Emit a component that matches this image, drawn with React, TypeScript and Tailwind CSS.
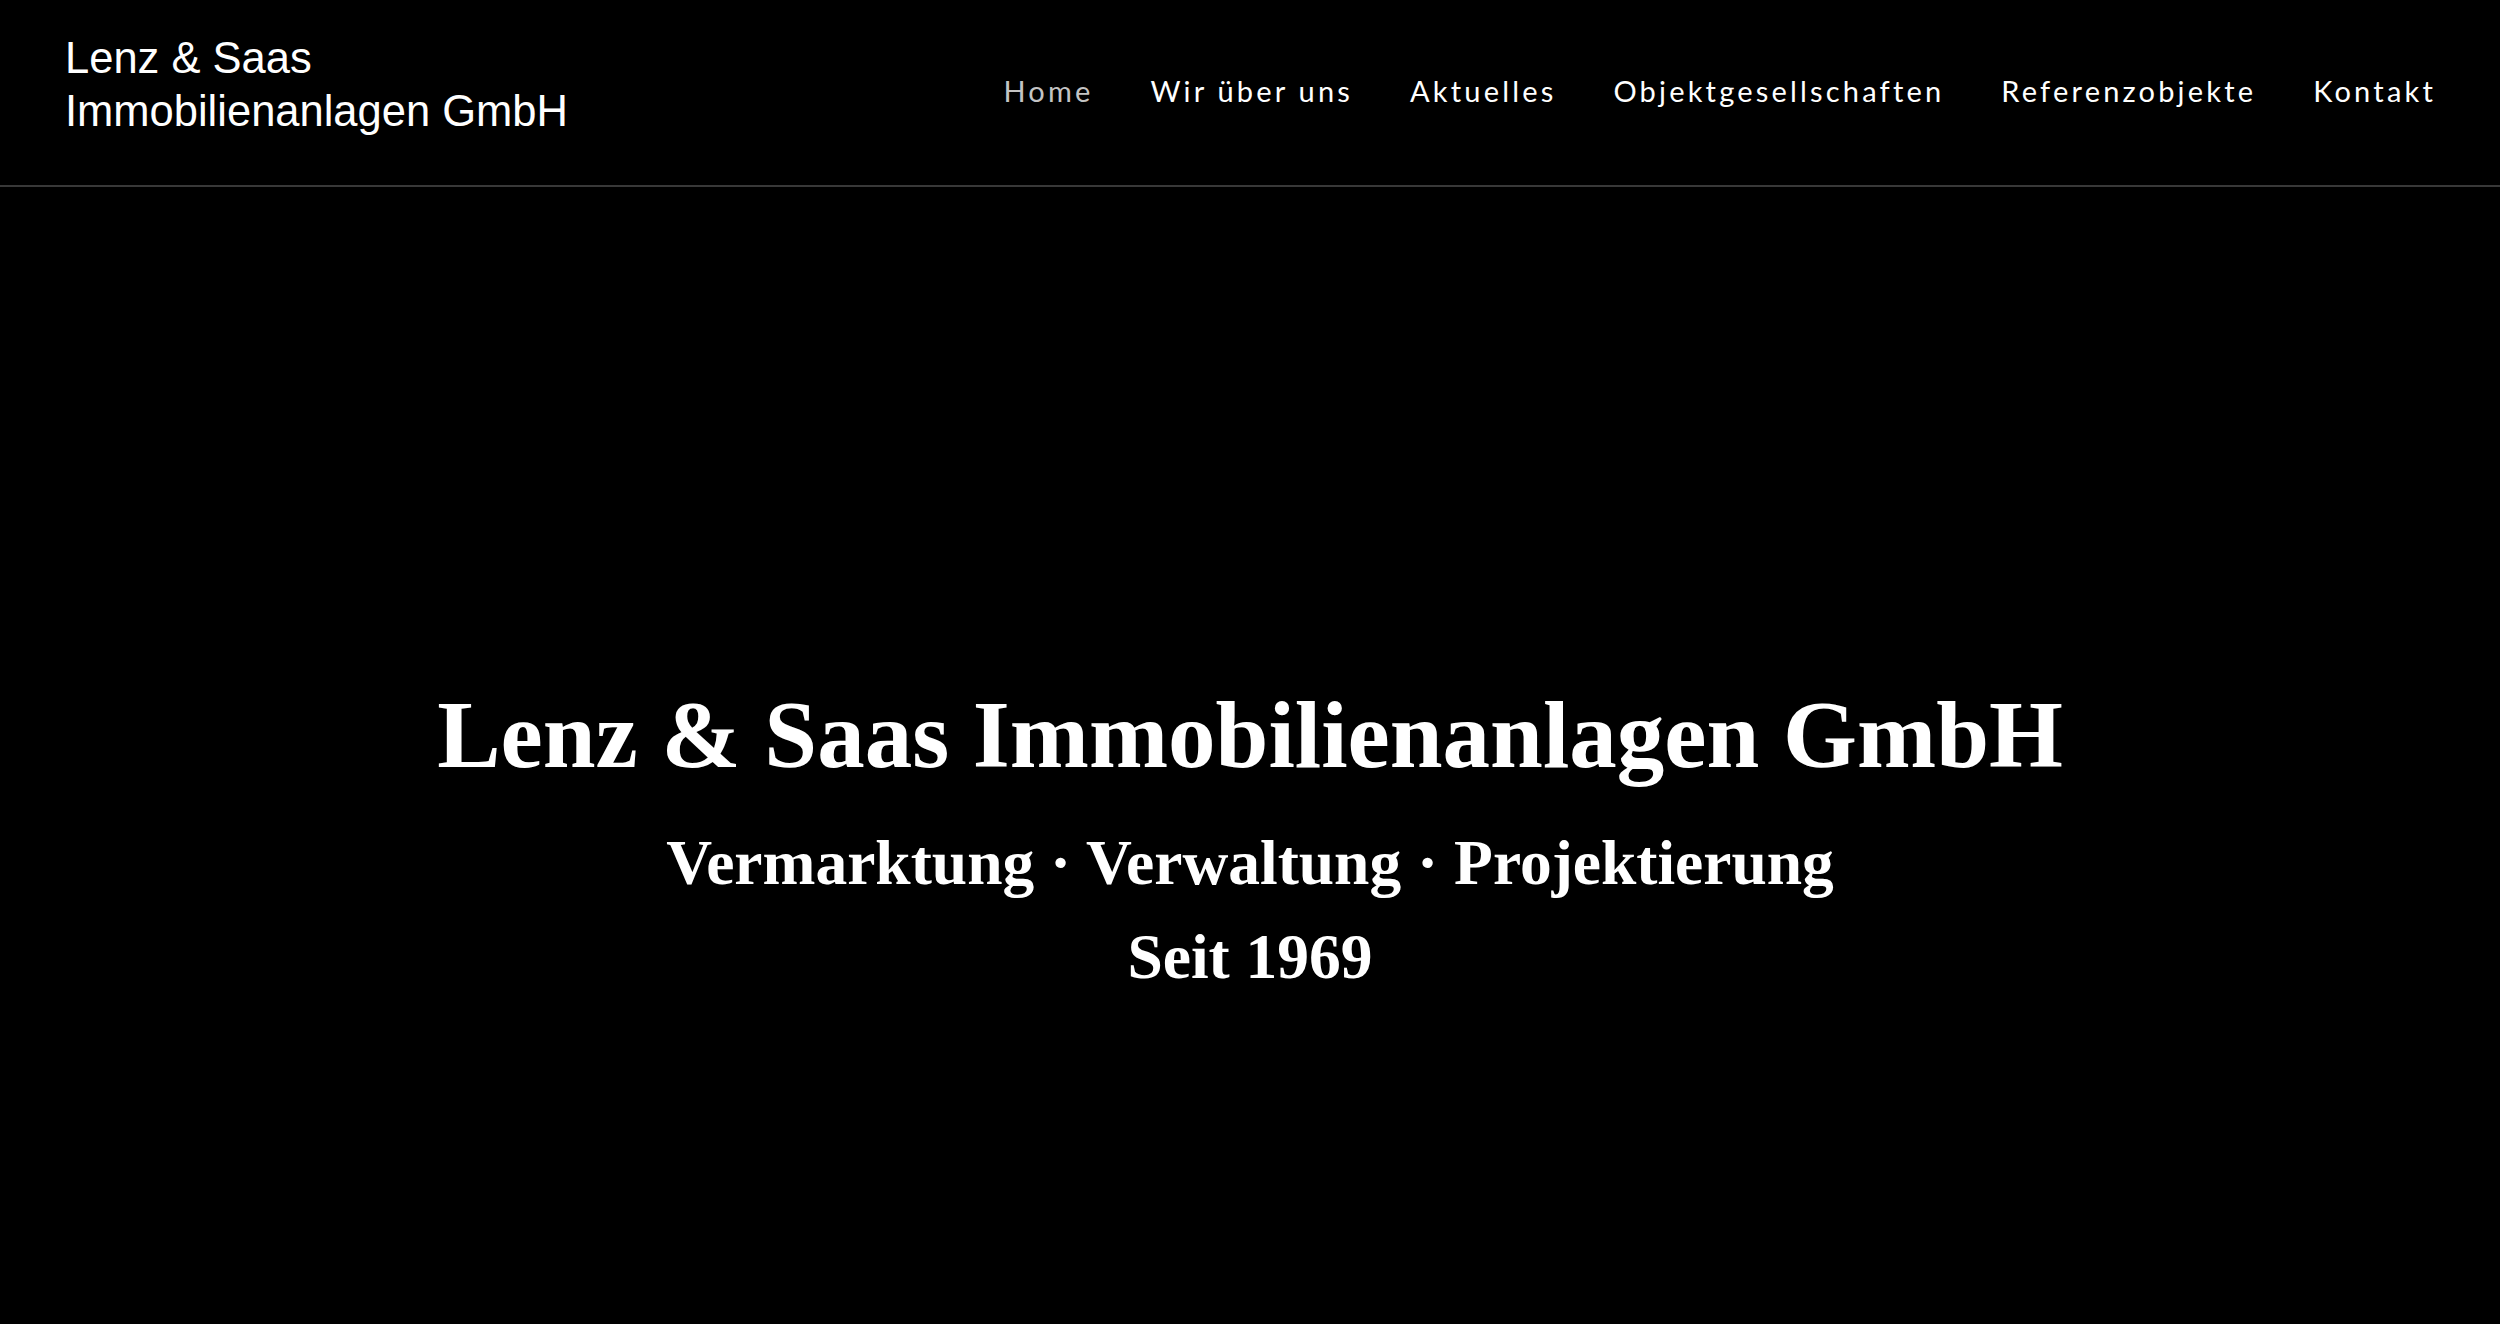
const NAV = ["Home", "Wir über uns", "Aktuelles", "Objektgesellschaften", "Referenzobjekte", "Kontakt"];

export default function App() {
  return (
    <div className="min-h-screen bg-black text-white">
      <header className="flex h-[187px] justify-between border-b-2 border-[#383838] pl-[65px] pr-[64px]">
        <div className="pt-[32px] font-['Liberation_Sans',Arial,sans-serif] text-[43.5px] leading-[53px]">
          <div>Lenz &amp; Saas</div>
          <div>Immobilienanlagen GmbH</div>
        </div>
        <nav className="mb-[4px] flex items-center gap-[57px] self-center font-['Lato',sans-serif] text-[29px] tracking-[0.11em]">
          {NAV.map((item, i) => (
            <a key={item} href="#" className={i === 0 ? "text-[#c4c4c4]" : "text-white"}>
              {item}
            </a>
          ))}
        </nav>
      </header>

      <main className="flex flex-col items-center pt-[491px] font-['Liberation_Serif','Times_New_Roman',serif] font-bold">
        <h1 className="mb-[24px] whitespace-nowrap text-[95px] leading-[114px]">
          Lenz &amp; Saas Immobilienanlagen GmbH
        </h1>
        <p className="whitespace-nowrap text-[63.5px] leading-[94px]">
          Vermarktung · Verwaltung · Projektierung
        </p>
        <p className="text-[63.5px] leading-[94px]">Seit 1969</p>
      </main>
    </div>
  );
}
